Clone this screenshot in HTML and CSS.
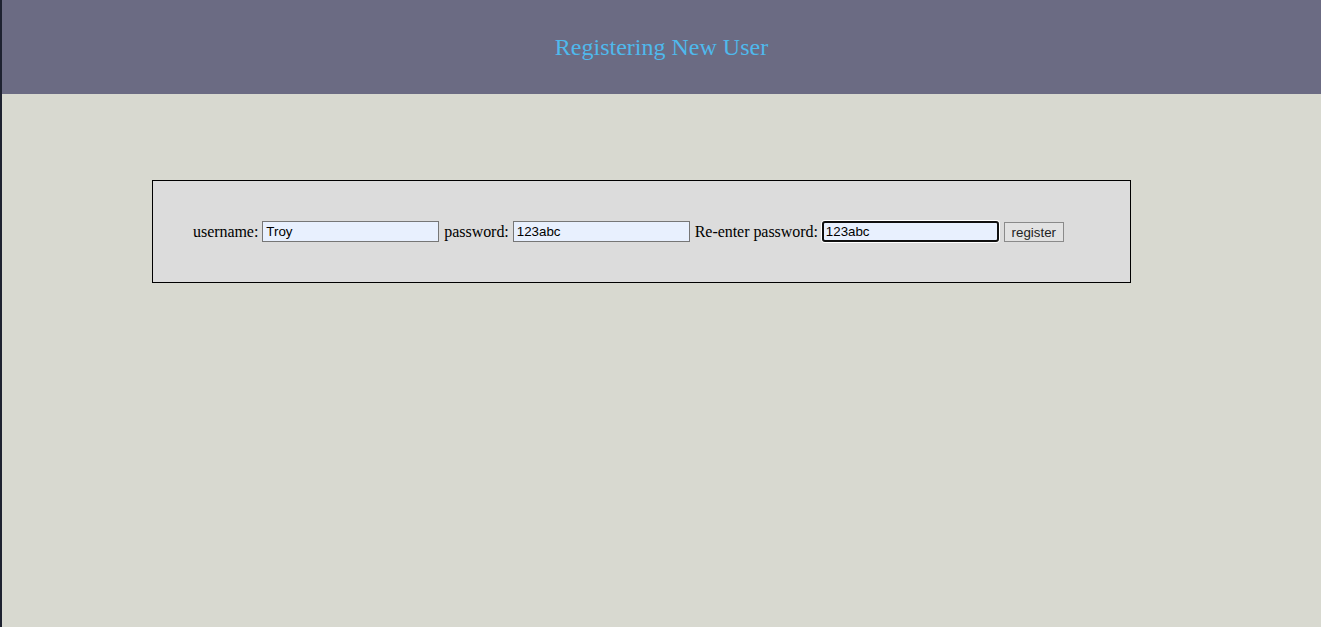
FILE: index.html
```html
<!DOCTYPE html>
<html>
<head>
<meta charset="utf-8">
<link rel="stylesheet" href="styles.css">
</head>
<body>
<div class="page">
  <header class="top">
    <h1 class="title">Registering New User</h1>
  </header>
  <main class="content">
    <form class="panel">
      <label class="lbl">username:</label>
      <input class="field" type="text" value="Troy">
      <label class="lbl">password:</label>
      <input class="field" type="text" value="123abc">
      <label class="lbl">Re-enter password:</label>
      <input class="field focused" type="text" value="123abc">
      <button class="btn" type="button">register</button>
    </form>
  </main>
</div>
</body>
</html>
```

FILE: styles.css
```css
html, body {
  margin: 0;
  padding: 0;
  height: 100%;
}
body {
  background: #d8d9d0;
  font-family: "Liberation Serif", "Times New Roman", serif;
  font-size: 16px;
  color: #000;
}
.page {
  min-height: 100%;
  border-left: 2px solid #1e2230;
  box-sizing: border-box;
}
.top {
  height: 94px;
  background: #6b6b83;
  display: flex;
  align-items: center;
  justify-content: center;
}
.title {
  margin: 0;
  font-weight: normal;
  font-size: 24px;
  color: #4fb9ec;
}
.content {
  padding-top: 86px;
  padding-left: 150px;
}
.panel {
  width: 979px;
  box-sizing: border-box;
  border: 1px solid #000;
  background: #dcdcdc;
  padding: 40px 40px;
  display: flex;
  align-items: center;
  gap: 4px;
  height: 103px;
}
.lbl {
  font-size: 16px;
  line-height: 21px;
  letter-spacing: -0.05px;
}
.field {
  width: 177px;
  height: 21px;
  box-sizing: border-box;
  border: 1px solid #767676;
  background: #e8f0fe;
  padding: 1px 3px;
  font-family: "Liberation Sans", Arial, sans-serif;
  font-size: 13.333px;
  color: #000;
  margin: 0 1px 0 0;
  outline: none;
}
.field.focused {
  border: 2px solid #101010;
  border-radius: 3px;
  padding: 0 2px;
  box-shadow: 0 0 0 1px #ffffff;
}
.btn {
  height: 20px;
  width: 60px;
  box-sizing: border-box;
  border: 1px solid #8a8a8a;
  background: #e2e2e2;
  font-family: "Liberation Sans", Arial, sans-serif;
  font-size: 13.333px;
  color: #222;
  padding: 0 4px;
  margin: 1px 0 0 0;
}
```
